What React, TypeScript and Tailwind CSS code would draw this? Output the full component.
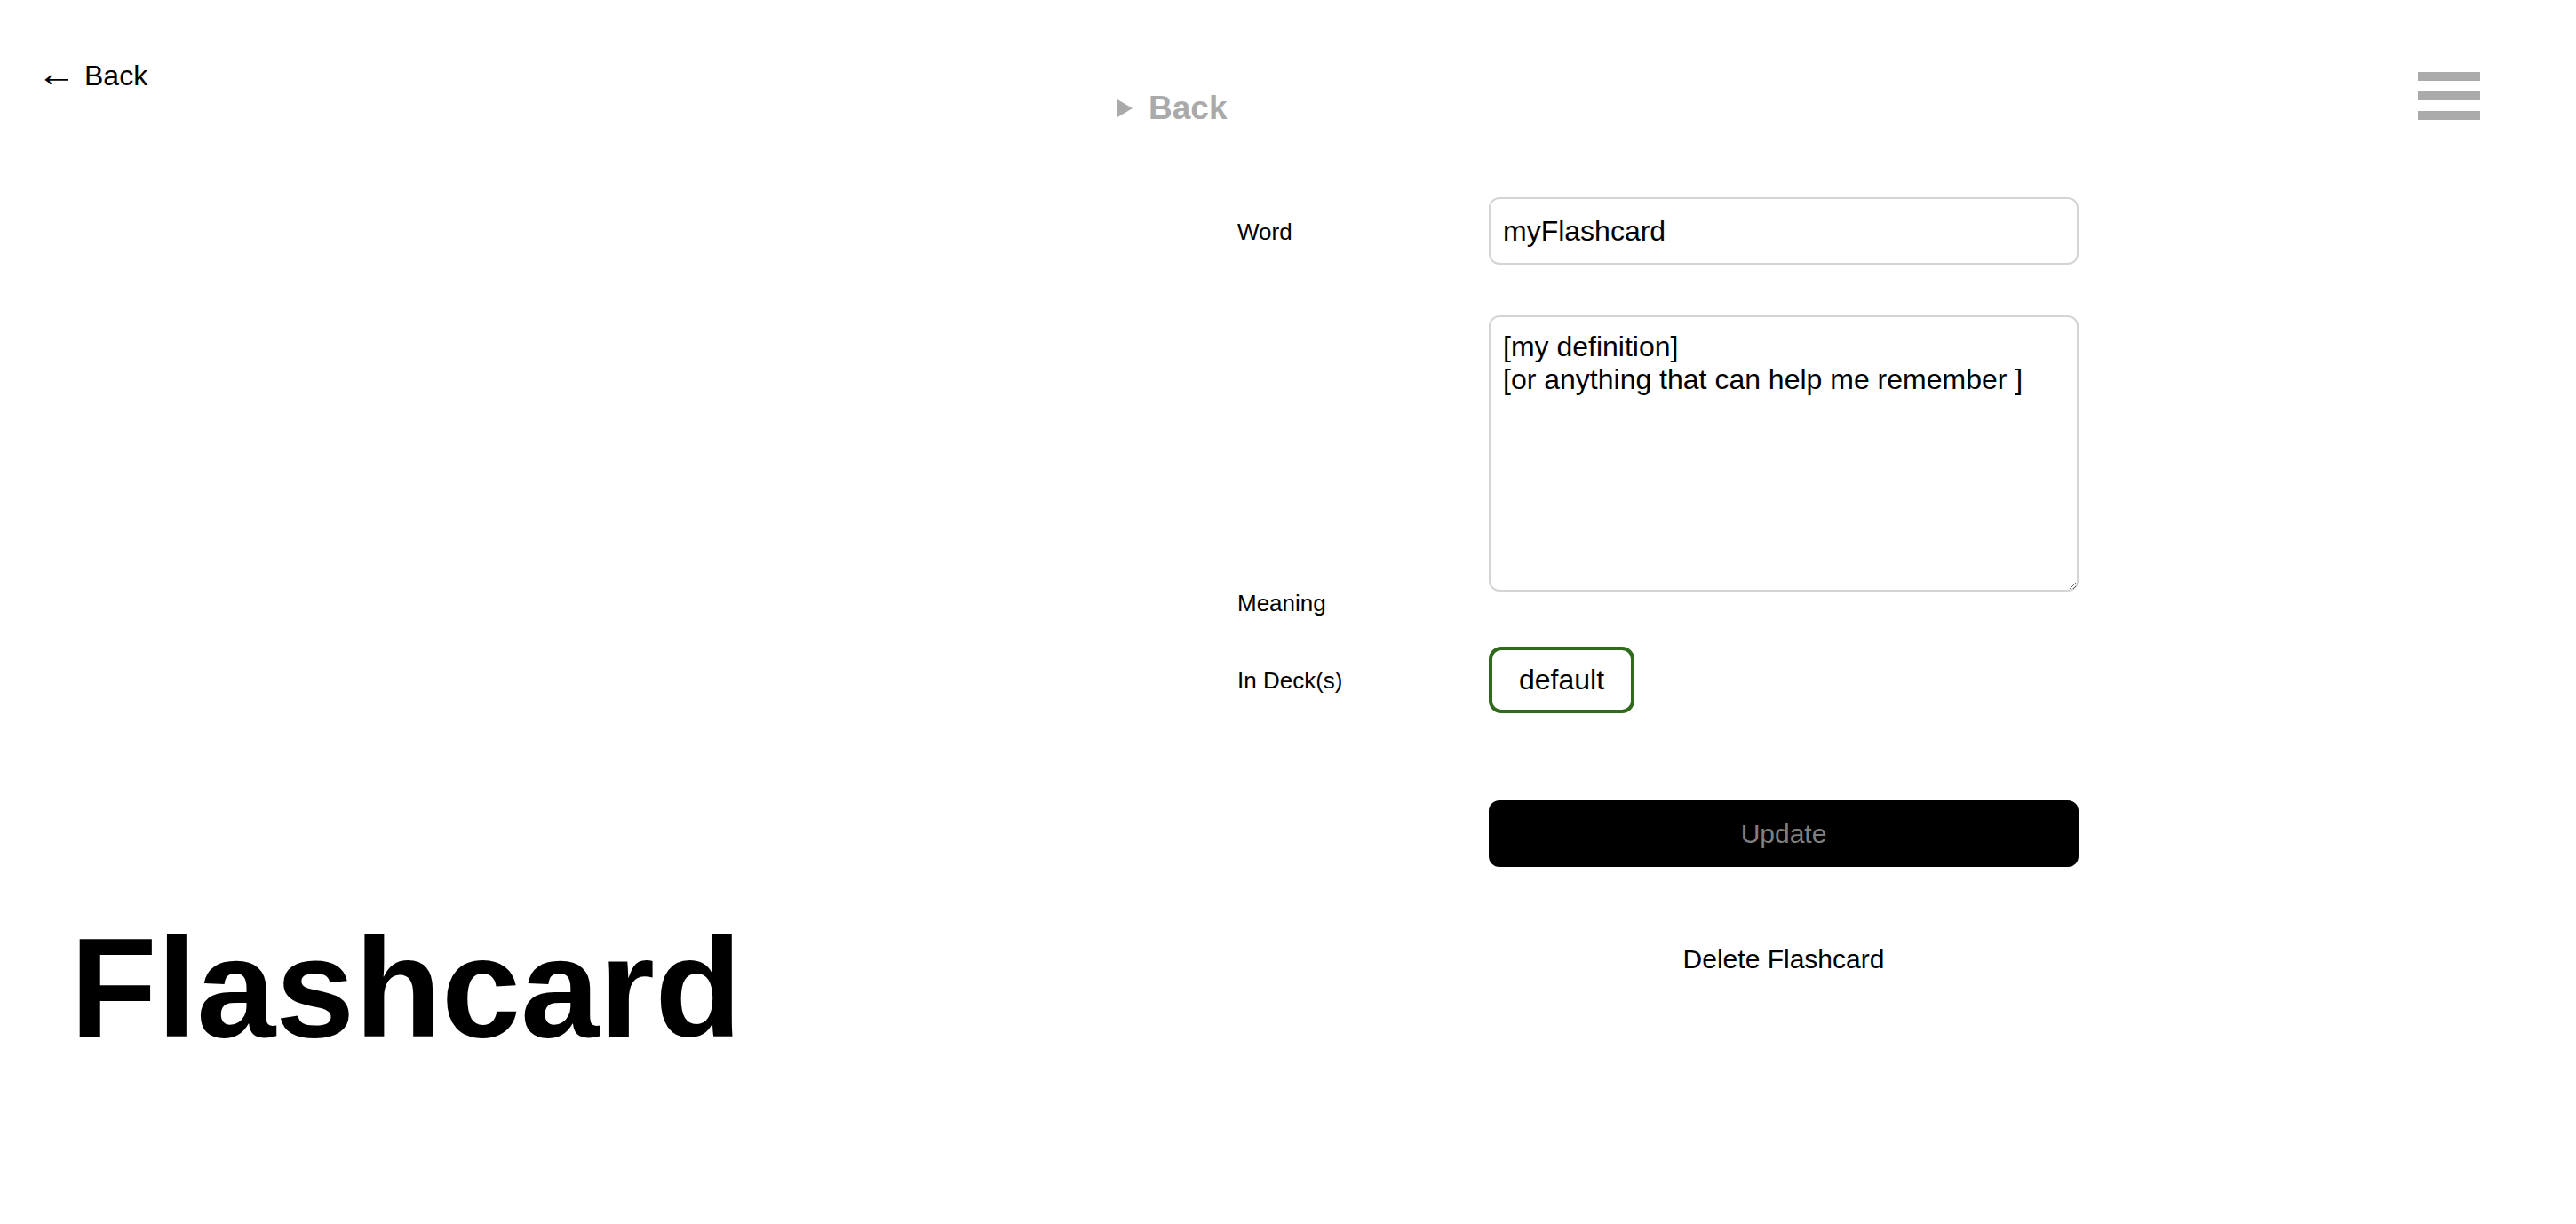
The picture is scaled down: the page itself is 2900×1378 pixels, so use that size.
import React from 'react';

const App = () => {
    return (
        <div className="relative min-h-screen w-full bg-white text-black font-['Liberation_Sans',Arial,sans-serif]">
            {/* Menu button */}
            <button className="absolute top-[81px] right-[108px] flex flex-col gap-[12px]">
                <span className="block w-[70px] h-[10px] bg-[#aaaaaa]" />
                <span className="block w-[70px] h-[10px] bg-[#aaaaaa]" />
                <span className="block w-[70px] h-[10px] bg-[#aaaaaa]" />
            </button>

            <div className="flex">
                {/* Left column */}
                <div className="w-[1258px] shrink-0 pt-[67px] pl-[42px]">
                    <a className="flex items-center gap-[10px] text-[32px] leading-[37px]">
                        <span className="text-[43px] leading-[37px] -mt-[6px]">←</span>
                        <span>Back</span>
                    </a>
                    <h1 className="mt-[928px] ml-[37px] text-[160px] leading-[160px] font-bold">Flashcard</h1>
                </div>

                {/* Right column */}
                <div className="flex-1 pt-[102px]">
                    <div className="flex items-center gap-[18px] h-[40px] text-[#aaaaaa]">
                        <svg width="17" height="20" viewBox="0 0 17 20" className="shrink-0">
                            <path d="M0 0 L17 10 L0 20 Z" fill="#aaaaaa" />
                        </svg>
                        <span className="text-[37px] leading-[40px] font-bold">Back</span>
                    </div>

                    <form className="mt-[80px] ml-[135px] w-[947px]">
                        {/* Word */}
                        <div className="flex items-center">
                            <label className="w-[283px] shrink-0 text-[26px] leading-[30px] pt-[2px]">Word</label>
                            <input
                                readOnly
                                defaultValue="myFlashcard"
                                className="w-[664px] h-[76px] px-[14px] border-2 border-[#d4d4d4] rounded-[12px] text-[32px] outline-none"
                            />
                        </div>

                        {/* Meaning */}
                        <div className="mt-[57px] flex items-end">
                            <label className="w-[283px] shrink-0 text-[26px] leading-[30px]">Meaning</label>
                            <textarea
                                readOnly
                                defaultValue={'[my definition]\n[or anything that can help me remember ]'}
                                className="w-[664px] h-[311px] mb-[28px] px-[14px] pt-[15px] border-2 border-[#d4d4d4] rounded-[12px] text-[32px] leading-[37px] outline-none"
                            />
                        </div>

                        {/* Decks */}
                        <div className="mt-[34px] flex items-center">
                            <label className="w-[283px] shrink-0 text-[26px] leading-[30px]">In Deck(s)</label>
                            <span className="h-[75px] px-[30px] flex items-center border-4 border-[#2f6a1d] rounded-[14px] text-[32px] leading-[37px]">
                                default
                            </span>
                        </div>

                        <button
                            type="button"
                            className="mt-[98px] ml-[283px] w-[664px] h-[75px] bg-black rounded-[12px] text-[30px] text-[#7f7f7f]"
                        >
                            Update
                        </button>

                        <div className="mt-[85px] ml-[283px] w-[664px] text-center text-[30px] leading-[37px]">
                            Delete Flashcard
                        </div>
                    </form>
                </div>
            </div>
        </div>
    );
};

export default App;
